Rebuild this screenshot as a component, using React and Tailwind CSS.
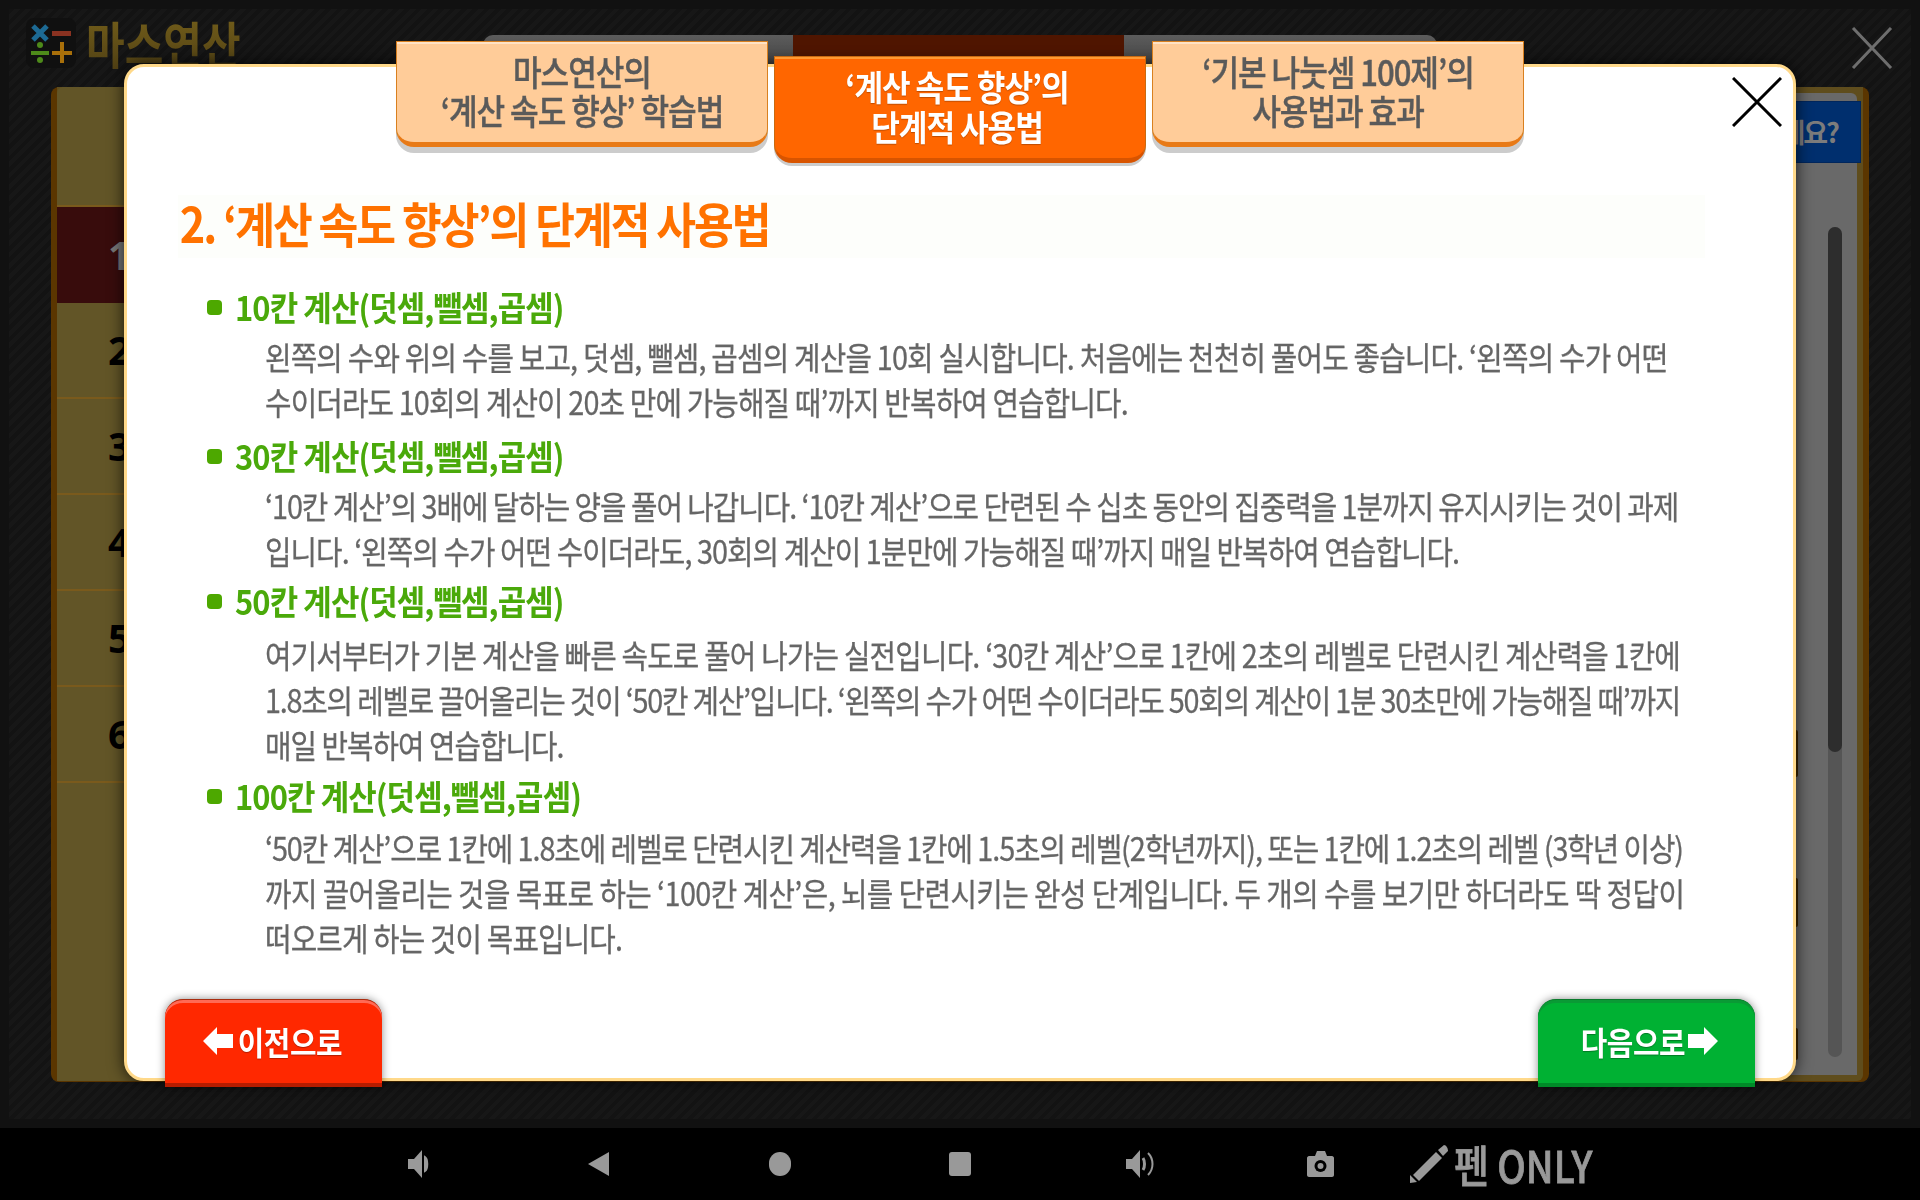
import * as React from "react";

const sections = [
  {
    title: "10칸 계산(덧셈,뺄셈,곱셈)",
    top: "mt-[26px]",
    gap: "mt-[4px]",
    lines: [
      ["왼쪽의 수와 위의 수를 보고, 덧셈, 뺄셈, 곱셈의 계산을 10회 실시합니다. 처음에는 천천히 풀어도 좋습니다. ‘왼쪽의 수가 어떤", "tracking-[-0.9px]"],
      ["수이더라도 10회의 계산이 20초 만에 가능해질 때’까지 반복하여 연습합니다.", "tracking-[-0.96px]"],
    ],
  },
  {
    title: "30칸 계산(덧셈,뺄셈,곱셈)",
    top: "mt-[9px]",
    gap: "mt-[4px]",
    lines: [
      ["‘10칸 계산’의 3배에 달하는 양을 풀어 나갑니다. ‘10칸 계산’으로 단련된 수 십초 동안의 집중력을 1분까지 유지시키는 것이 과제", "tracking-[-1.15px]"],
      ["입니다. ‘왼쪽의 수가 어떤 수이더라도, 30회의 계산이 1분만에 가능해질 때’까지 매일 반복하여 연습합니다.", "tracking-[-1.05px]"],
    ],
  },
  {
    title: "50칸 계산(덧셈,뺄셈,곱셈)",
    top: "mt-[5px]",
    gap: "mt-[8px]",
    lines: [
      ["여기서부터가 기본 계산을 빠른 속도로 풀어 나가는 실전입니다. ‘30칸 계산’으로 1칸에 2초의 레벨로 단련시킨 계산력을 1칸에", "tracking-[-0.9px]"],
      ["1.8초의 레벨로 끌어올리는 것이 ‘50칸 계산’입니다. ‘왼쪽의 수가 어떤 수이더라도 50회의 계산이 1분 30초만에 가능해질 때’까지", "tracking-[-1.35px]"],
      ["매일 반복하여 연습합니다.", "tracking-[-1.1px]"],
    ],
  },
  {
    title: "100칸 계산(덧셈,뺄셈,곱셈)",
    top: "mt-[6px]",
    gap: "mt-[6px]",
    lines: [
      ["‘50칸 계산’으로 1칸에 1.8초에 레벨로 단련시킨 계산력을 1칸에 1.5초의 레벨(2학년까지), 또는 1칸에 1.2초의 레벨 (3학년 이상)", "tracking-[-1.2px]"],
      ["까지 끌어올리는 것을 목표로 하는 ‘100칸 계산’은, 뇌를 단련시키는 완성 단계입니다. 두 개의 수를 보기만 하더라도 딱 정답이", "tracking-[-0.65px]"],
      ["떠오르게 하는 것이 목표입니다.", "tracking-[-0.96px]"],
    ],
  },
];

function Logo() {
  return (
    <svg width="50" height="50" viewBox="0 0 50 50" className="mt-[9px] shrink-0 rounded-[8px] bg-[#101010]">
      <path d="M7 8L21 22M21 8L7 22" stroke="#1d6a94" strokeWidth="5" />
      <rect x="26" y="13" width="19" height="5" fill="#8a3221" />
      <rect x="5" y="33" width="18" height="4" fill="#4d8a1a" />
      <circle cx="14" cy="27" r="3" fill="#4d8a1a" />
      <circle cx="14" cy="42" r="3" fill="#4d8a1a" />
      <path d="M26 35H46M36 24V45" stroke="#a86f0a" strokeWidth="4" />
    </svg>
  );
}

function Header() {
  return (
    <div className="flex h-[78px] pl-[17px]">
      <div className="flex w-[457px]">
        <Logo />
        <div className="ml-[10px] mt-[3px] h-[60px] w-max origin-left scale-x-[0.84] whitespace-nowrap bg-linear-to-b from-[#75601a] to-[#4f3f14] bg-clip-text text-[50px] font-bold leading-[60px] text-transparent">
          마스연산
        </div>
      </div>
      <div className="mt-[26px] flex h-[52px] w-[954px] overflow-hidden rounded-t-[10px]">
        <div className="w-[310px] bg-linear-to-b from-[#5c5c5c] to-[#333333]"></div>
        <div className="w-[331px] bg-[#4f1500]"></div>
        <div className="flex-1 bg-linear-to-b from-[#5c5c5c] to-[#333333]"></div>
      </div>
      <svg width="42" height="42" viewBox="0 0 42 42" className="ml-[414px] mt-[18px] shrink-0">
        <path d="M2 1L40 41M40 1L2 41" stroke="#6e6e6e" strokeWidth="3" />
      </svg>
    </div>
  );
}

function Row({ n, active }) {
  return (
    <div
      className={
        active
          ? "flex h-[96px] items-center bg-[#380c0c] pl-[51px] font-['Noto_Sans'] text-[40px] font-bold text-[#777777]"
          : "flex h-[96px] items-center border-b-2 border-[#7a5a1c] bg-[#625527] pl-[51px] font-['Noto_Sans'] text-[40px] font-bold text-black"
      }
    >
      {n}
    </div>
  );
}

function Panel() {
  return (
    <div className="ml-[42px] flex h-[995px] w-[1818px] rounded-[8px] bg-[#5b3600] px-[6px] pb-[1px]">
      <div className="flex flex-1 rounded-b-[6px] bg-[#5f4d1d]">
        <div className="w-[1400px] rounded-tl-[6px] bg-[#625527]">
          <div className="h-[120px] border-b-2 border-[#7a5a1c]"></div>
          {[1, 2, 3, 4, 5, 6].map((n) => (
            <Row key={n} n={n} active={n === 1} />
          ))}
        </div>
        <div className="flex flex-1 pb-[6px] pr-[6px] pt-[6px]">
          <div className="flex flex-1 flex-col rounded-t-[6px] bg-[#696969]">
            <div className="mt-[8px] -mr-[4px] flex h-[62px] shrink-0 items-center justify-end border border-[#00265c] bg-[#002f6e] pr-[22px] text-[27px] font-bold tracking-[-2px] text-[#7c7c7c]">
              세요?
            </div>
            <div className="mr-[15px] mt-[64px] h-[830px] w-[14px] self-end rounded-full bg-[#555555]">
              <div className="h-[525px] rounded-full bg-[#2d2d2d]"></div>
            </div>
          </div>
        </div>
      </div>
    </div>
  );
}

function Tab({ lines, active }) {
  return (
    <div
      className={
        active
          ? "mt-[15px] h-[107px] w-[372px] rounded-b-[18px] border border-b-[5px] border-[#c96a10] border-b-[#d85400] bg-[#ff6600] pr-[6px] pt-[9px] text-center text-[35px] font-bold leading-[40px] text-white shadow-[inset_0_2px_0_#ff9933,0_3px_0_#cccccc] [text-shadow:0_1px_1px_rgba(0,0,0,0.25)]"
          : "h-[106px] w-[372px] rounded-b-[18px] border border-b-[5px] border-[#d9801f] border-b-[#e87a17] bg-[#ffcc99] pt-[9px] text-center text-[35px] font-medium leading-[39px] text-[#5a5a5a] shadow-[inset_0_2px_0_#ffe3c6,0_6px_0_#cccccc] [-webkit-text-stroke:0.4px]"
      }
    >
      {lines.map((line) => (
        <p key={line} className="scale-x-[0.89] whitespace-nowrap tracking-[-1.2px]">
          {line}
        </p>
      ))}
    </div>
  );
}

function Section({ section }) {
  return (
    <div className={section.top}>
      <div className="flex h-[46px] items-center pl-[29px]">
        <span className="h-[15px] w-[15px] shrink-0 rounded-[4px] bg-[#4da800]"></span>
        <h3 className="ml-[13px] w-max origin-left scale-x-[0.91] whitespace-nowrap text-[34px] font-bold leading-[46px] tracking-[-1px] text-[#4aa90a]">
          {section.title}
        </h3>
      </div>
      <div className={section.gap + " pl-[87px]"}>
        {section.lines.map(([line, tracking]) => (
          <p
            key={line}
            className={
              tracking +
              " h-[45px] w-max origin-left scale-x-[0.9] whitespace-nowrap text-[32px] leading-[45px] text-[#666666] [-webkit-text-stroke:0.3px]"
            }
          >
            {line}
          </p>
        ))}
      </div>
    </div>
  );
}

function Modal() {
  return (
    <div className="absolute left-[124px] top-[64px] h-[1017px] w-[1672px] rounded-[20px] border-[3px] border-[#ffd98a] bg-white shadow-[0_0_16px_rgba(0,0,0,0.75)]">
      <div className="ml-[51px] mt-[128px] w-[1527px]">
        <div className="h-[63px] bg-[#fdfefb]">
          <h2 className="h-[54px] w-max origin-left scale-x-[0.9] whitespace-nowrap pl-[2px] text-[48px] font-bold leading-[54px] tracking-[-2.2px] text-[#ff7200]">
            2. ‘계산 속도 향상’의 단계적 사용법
          </h2>
        </div>
        {sections.map((section) => (
          <Section key={section.title} section={section} />
        ))}
      </div>
      <svg width="50" height="50" viewBox="0 0 50 50" className="absolute right-[11px] top-[10px]">
        <path d="M1 1L49 49M49 1L1 49" stroke="#000000" strokeWidth="3" />
      </svg>
      <span className="absolute -right-[5px] top-[663px] h-[47px] w-[2px] rounded-r bg-[#2a1a00]"></span>
      <span className="absolute -right-[5px] top-[811px] h-[49px] w-[2px] rounded-r bg-[#2a1a00]"></span>
      <span className="absolute -right-[5px] top-[961px] h-[32px] w-[2px] rounded-r bg-[#2a1a00]"></span>
    </div>
  );
}

function NavButton({ label, next }) {
  const arrow = (
    <svg width="30" height="28" viewBox="0 0 30 28" className="shrink-0">
      <path d={next ? "M0 7H16V0L30 14L16 28V21H0Z" : "M30 7H14V0L0 14L14 28V21H30Z"} fill="#ffffff" />
    </svg>
  );
  return (
    <div
      className={
        next
          ? "absolute left-[1538px] top-[999px] flex h-[88px] w-[217px] items-center justify-center rounded-t-[18px] border-t border-b-[4px] border-t-[#0a7a2c] border-b-[#008a28] bg-[#00b133] pb-[1px] shadow-[inset_0_3px_0_#0a9a35,0_0_8px_rgba(0,0,0,0.45)]"
          : "absolute left-[165px] top-[999px] flex h-[88px] w-[217px] items-center justify-center rounded-t-[18px] border-t border-b-[4px] border-t-[#a82c10] border-b-[#b71c00] bg-[#ff2800] pb-[1px] shadow-[inset_0_3px_0_#ff6a55,0_0_8px_rgba(0,0,0,0.45)]"
      }
    >
      {!next && arrow}
      <span className="-ml-[1px] mr-[7px] w-[106px] whitespace-nowrap text-center text-[32px] font-bold tracking-[-0.5px] text-white [text-shadow:0_1px_1px_rgba(0,0,0,0.3)]">
        <span className="inline-block scale-x-[0.9]">{label}</span>
      </span>
      {next && arrow}
    </div>
  );
}

function BottomBar() {
  return (
    <div className="flex h-[72px] items-center bg-black pl-[408px] text-[#999999]">
      <svg width="24" height="28" viewBox="0 0 24 28">
        <path d="M0 9H6L14 0V28L6 19H0Z" fill="#999999" />
        <path d="M17 7C20 9 20 19 17 21Z" stroke="#999999" strokeWidth="2" fill="#999999" />
      </svg>
      <svg width="21" height="24" viewBox="0 0 21 24" className="ml-[156px]">
        <path d="M21 0V24L0 12Z" fill="#999999" />
      </svg>
      <span className="ml-[160px] h-[24px] w-[22px] rounded-full bg-[#999999]"></span>
      <span className="ml-[158px] h-[24px] w-[22px] rounded-[3px] bg-[#999999]"></span>
      <svg width="29" height="28" viewBox="0 0 29 28" className="ml-[155px]">
        <path d="M0 9H6L14 0V28L6 19H0Z" fill="#999999" />
        <path d="M17 8C19 11 19 17 17 20" stroke="#999999" strokeWidth="3" fill="none" />
        <path d="M22 3C28 9 28 19 22 25" stroke="#999999" strokeWidth="2" fill="none" />
      </svg>
      <svg width="27" height="26" viewBox="0 0 27 26" className="ml-[152px]">
        <path
          d="M2 5H8L10 0H18L20 5H25C26 5 27 6 27 7V24C27 25 26 26 25 26H2C1 26 0 25 0 24V7C0 6 1 5 2 5Z"
          fill="#999999"
        />
        <circle cx="13.5" cy="15" r="6" fill="#000000" />
        <circle cx="13.5" cy="15" r="3" fill="#999999" />
      </svg>
      <svg width="38" height="38" viewBox="0 0 38 38" className="ml-[76px]">
        <path d="M28 5L34 0C36 0 38 3 38 6L33 11Z" fill="#999999" />
        <path d="M26 7L32 13L9 36L3 30Z" fill="#999999" />
        <path d="M0 30L7 37L0 38Z" fill="#999999" />
      </svg>
      <span className="ml-[6px] w-max origin-left scale-x-[0.86] whitespace-nowrap text-[44px] font-medium leading-none [-webkit-text-stroke:0.8px]">
        펜 ONLY
      </span>
    </div>
  );
}

export default function App() {
  return (
    <div className="relative h-[1200px] w-[1920px] overflow-hidden bg-black font-['Noto_Sans_CJK_KR',sans-serif]">
      <div className="h-[1128px] bg-[#111111] pb-[9px] pl-[9px] pr-[9px] pt-[9px]">
        <div className="h-[1110px] bg-[repeating-linear-gradient(135deg,#131313_0px,#131313_4px,#171717_4px,#171717_8px)]">
          <Header />
          <Panel />
        </div>
      </div>
      <BottomBar />
      <Modal />
      <div className="absolute left-[396px] top-[41px] flex items-start gap-[6px]">
        <Tab lines={["마스연산의", "‘계산 속도 향상’ 학습법"]} />
        <Tab active lines={["‘계산 속도 향상’의", "단계적 사용법"]} />
        <Tab lines={["‘기본 나눗셈 100제’의", "사용법과 효과"]} />
      </div>
      <NavButton label="이전으로" />
      <NavButton next label="다음으로" />
    </div>
  );
}
